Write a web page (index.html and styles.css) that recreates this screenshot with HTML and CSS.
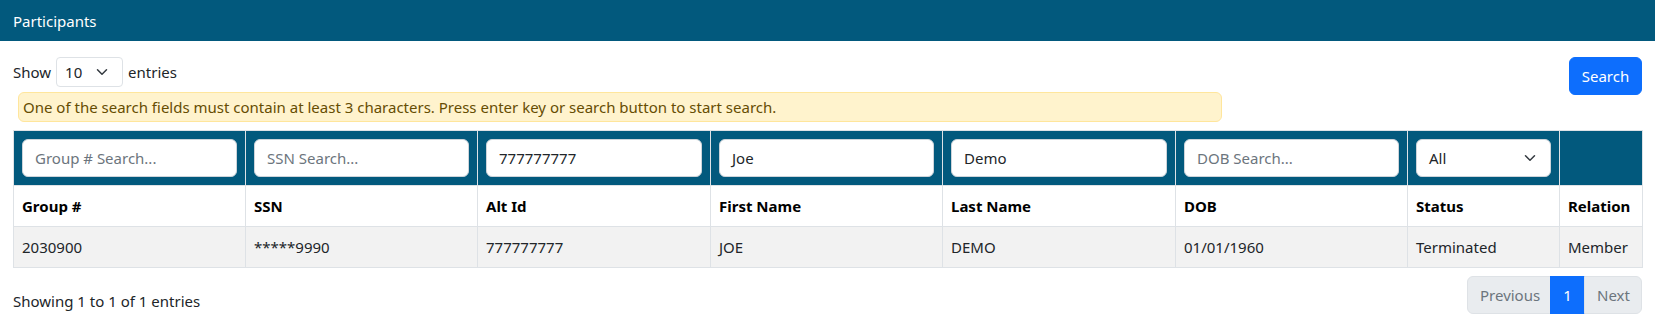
FILE: index.html
```html
<!DOCTYPE html>
<html lang="en">

<head>
    <meta charset="UTF-8">
    <meta name="viewport" content="width=device-width, initial-scale=1.0">
    <title>Participants</title>
    <link rel="stylesheet" href="styles.css">
</head>

<body>
    <div class="panelHead">Participants</div>

    <div class="panelBody">
        <div class="toolbar">
            <div class="toolLeft">
                <div class="lengthBox">
                    <span>Show</span>
                    <div class="smallSelect">
                        <span>10</span>
                        <svg class="chev" viewBox="0 0 16 16"><path d="m2 5 6 6 6-6" /></svg>
                    </div>
                    <span>entries</span>
                </div>
                <div class="warn">One of the search fields must contain at least 3 characters. Press enter key or search button to start search.</div>
            </div>
            <button class="btnSearch">Search</button>
        </div>

        <table class="grid">
            <colgroup>
                <col style="width:232px">
                <col style="width:232px">
                <col style="width:233px">
                <col style="width:232px">
                <col style="width:233px">
                <col style="width:232px">
                <col style="width:152px">
                <col style="width:83px">
            </colgroup>
            <thead>
                <tr class="filterRow">
                    <td><div class="field placeholder">Group # Search...</div></td>
                    <td><div class="field placeholder">SSN Search...</div></td>
                    <td><div class="field">777777777</div></td>
                    <td><div class="field">Joe</div></td>
                    <td><div class="field">Demo</div></td>
                    <td><div class="field placeholder">DOB Search...</div></td>
                    <td>
                        <div class="field selectField">
                            <span>All</span>
                            <svg class="chev" viewBox="0 0 16 16"><path d="m2 5 6 6 6-6" /></svg>
                        </div>
                    </td>
                    <td></td>
                </tr>
                <tr class="headRow">
                    <th>Group #</th>
                    <th>SSN</th>
                    <th>Alt Id</th>
                    <th>First Name</th>
                    <th>Last Name</th>
                    <th>DOB</th>
                    <th>Status</th>
                    <th>Relation</th>
                </tr>
            </thead>
            <tbody>
                <tr class="odd">
                    <td>2030900</td>
                    <td>*****9990</td>
                    <td>777777777</td>
                    <td>JOE</td>
                    <td>DEMO</td>
                    <td>01/01/1960</td>
                    <td>Terminated</td>
                    <td>Member</td>
                </tr>
            </tbody>
        </table>

        <div class="tableFoot">
            <div class="info">Showing 1 to 1 of 1 entries</div>
            <ul class="pager">
                <li class="pageItem disabled">Previous</li>
                <li class="pageItem active">1</li>
                <li class="pageItem disabled">Next</li>
            </ul>
        </div>
    </div>
</body>

</html>
```

FILE: styles.css
```css
body {
    margin: 0;
    padding: 0;
    background: #fff;
    color: #212529;
    font-family: "Segoe UI", "Noto Sans", sans-serif;
    font-size: 15px;
    line-height: 24px;
}

.panelHead {
    height: 41px;
    display: flex;
    align-items: center;
    padding: 0 13px;
    background: #02597d;
    color: #fff;
}

.panelBody {
    padding: 16px 13px 0 13px;
}

.toolbar {
    display: flex;
    justify-content: space-between;
    align-items: flex-start;
}

.lengthBox {
    display: flex;
    align-items: center;
    gap: 5px;
    height: 30px;
}

.smallSelect {
    box-sizing: border-box;
    width: 67px;
    height: 30px;
    display: flex;
    align-items: center;
    justify-content: space-between;
    padding: 0 12px 0 8px;
    border: 1px solid #dee2e6;
    border-radius: 4px;
    font-size: 15px;
}

.chev {
    width: 16px;
    height: 12px;
    fill: none;
    stroke: #343a40;
    stroke-width: 2;
    stroke-linecap: round;
    stroke-linejoin: round;
}

.warn {
    box-sizing: border-box;
    width: 1204px;
    height: 30px;
    margin: 5px 0 0 5px;
    padding: 2px 4px;
    background: #fff3cd;
    border: 1px solid #ffe69c;
    border-radius: 6px;
    color: #664d03;
}

.btnSearch {
    height: 38px;
    width: 73px;
    margin-top: 0;
    border: 1px solid #0d6efd;
    border-radius: 6px;
    background: #0d6efd;
    color: #fff;
    font-family: inherit;
    font-size: 15px;
    padding: 0;
}

.grid {
    margin-top: 8px;
    width: 1629px;
    table-layout: fixed;
    border-collapse: collapse;
}

.grid td,
.grid th {
    padding: 8px;
    border: 1px solid #dee2e6;
    text-align: left;
    vertical-align: top;
    white-space: nowrap;
}

.filterRow td {
    background: #02597d;
}

.field {
    box-sizing: border-box;
    height: 38px;
    padding: 6px 12px;
    background: #fff;
    border: 1px solid #ced4da;
    border-radius: 6px;
    color: #212529;
}

.placeholder {
    color: #6c757d;
}

.selectField {
    display: flex;
    align-items: center;
    justify-content: space-between;
}

.headRow th {
    font-weight: 700;
    color: #000;
}

.odd td {
    background: #f2f2f2;
}

.tableFoot {
    display: flex;
    justify-content: space-between;
    align-items: flex-start;
}

.info {
    padding-top: 21px;
}

.pager {
    display: flex;
    list-style: none;
    margin: 8px 0 0 0;
    padding: 0;
}

.pageItem {
    box-sizing: border-box;
    height: 38px;
    padding: 6px 12px;
    border: 1px solid #dee2e6;
    margin-left: -1px;
}

.pageItem:first-child {
    border-radius: 6px 0 0 6px;
    margin-left: 0;
    width: 84px;
}

.pageItem:last-child {
    border-radius: 0 6px 6px 0;
    width: 58px;
}

.disabled {
    background: #e9ecef;
    color: #6c757d;
}

.active {
    width: 35px;
    text-align: center;
    background: #0d6efd;
    border-color: #0d6efd;
    color: #fff;
}
```
